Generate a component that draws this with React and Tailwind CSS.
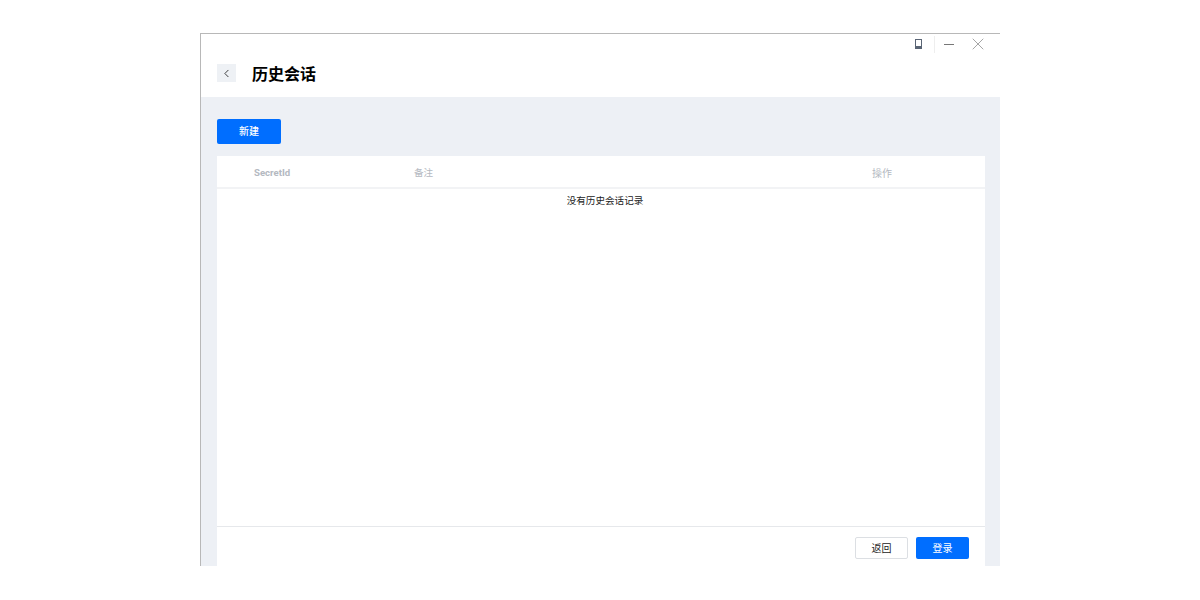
import React from 'react';
import { ChevronLeft, X } from 'lucide-react';

const App = () => {
    return (
        <div className="w-full h-[600px] bg-white flex justify-center pt-[33px] font-['Roboto','Noto_Sans_CJK_SC',sans-serif]">
            <div className="w-[800px] h-[533px] border-t border-l border-[#b8b8b8] flex flex-col">
                <div className="h-[63px] bg-white flex flex-col shrink-0">
                    <div className="h-[20px] flex justify-end items-center">
                        <svg width="7" height="10" viewBox="0 0 7 10" className="mr-[12px]">
                            <rect x="0.5" y="0.5" width="6" height="9" fill="none" stroke="#5a6575" />
                            <rect x="1" y="7" width="5" height="2" fill="#5a6575" />
                        </svg>
                        <div className="w-px h-[17px] bg-[#eeeeee] mr-[9px]"></div>
                        <div className="w-[10px] h-px bg-[#777777] mr-[14px]"></div>
                        <X size={20} strokeWidth={0.8} className="text-[#777777] mr-[12px]" />
                    </div>
                    <div className="flex items-start pl-[16px] mt-[10px]">
                        <div className="w-[19px] h-[18px] bg-[#eef1f5] flex items-center justify-center">
                            <ChevronLeft size={13} strokeWidth={1.6} className="text-[#222222]" />
                        </div>
                        <h1 className="ml-[16px] mt-[1px] text-[16px] leading-[20px] font-bold text-black">历史会话</h1>
                    </div>
                </div>
                <div className="flex-1 bg-[#edf0f5] px-[16px] pr-[15px] pt-[22px] flex flex-col min-h-0">
                    <button type="button" className="w-[64px] h-[25px] bg-[#006eff] rounded-[2px] text-white text-[10px] font-medium shrink-0">新建</button>
                    <div className="mt-[12px] flex-1 bg-white flex flex-col min-h-0">
                        <div className="h-[33px] pt-[3px] border-b-2 border-[#f2f3f5] flex items-center text-[10px] text-[#b4b9c1] shrink-0">
                            <div className="w-[197px] pl-[37px] font-bold text-[9.6px]">SecretId</div>
                            <div className="w-[458px] text-[9.6px]">备注</div>
                            <div>操作</div>
                        </div>
                        <div className="flex-1 text-center text-[9.6px] leading-[14px] text-[#222222] pt-[5px] pl-[8px]">没有历史会话记录</div>
                        <div className="h-[40px] border-t border-[#e6e8eb] flex justify-end items-start pt-[10px] pr-[16px] gap-[8px] shrink-0">
                            <button type="button" className="w-[53px] h-[22px] bg-white border border-[#dcdfe3] rounded-[2px] text-[10px] text-[#222222]">返回</button>
                            <button type="button" className="w-[53px] h-[22px] bg-[#006eff] rounded-[2px] text-[10px] text-white">登录</button>
                        </div>
                    </div>
                </div>
            </div>
        </div>
    );
};

export default App;
